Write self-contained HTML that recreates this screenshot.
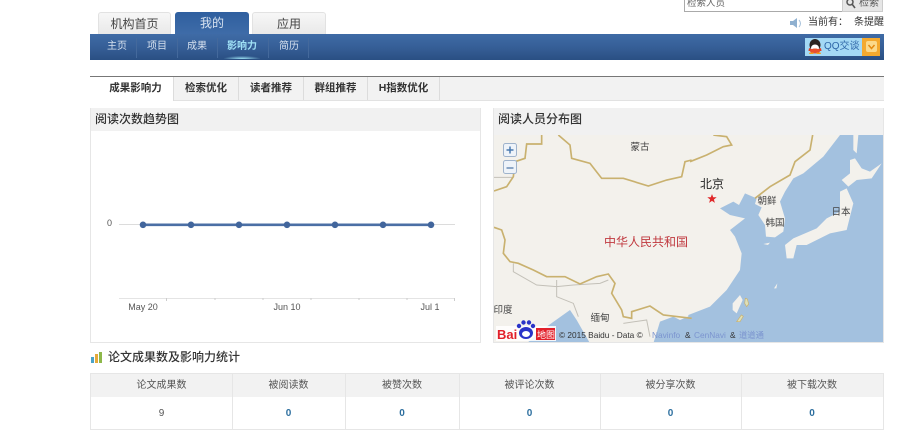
<!DOCTYPE html>
<html><head><meta charset="utf-8">
<style>
html,body{margin:0;padding:0;background:#fff;}
#p{position:relative;width:900px;height:446px;overflow:hidden;background:#fff;font-family:"Liberation Sans","Noto Sans CJK SC",sans-serif;color:#333;filter:blur(.35px);}
#p div{position:absolute;box-sizing:border-box;}
.t{white-space:nowrap;line-height:1;}
.top{top:12px;height:22px;background:linear-gradient(#f7f7f7,#e9e9e9);border:1px solid #e2e2e2;border-bottom:0;border-radius:3px 3px 0 0;font-size:12px;line-height:22px;text-align:center;color:#444;}
.sub{top:41px;font-size:10px;color:#d5e0ee;line-height:12px;}
.sep{top:38px;width:1px;height:20px;background:#44699c;}
.tab{top:77px;height:23px;font-size:10.5px;font-weight:700;line-height:23px;text-align:center;color:#333;border-right:1px solid #dcdcdc;}
.h{font-size:12px;font-weight:500;color:#333;}
.th{top:380px;font-size:10px;color:#555;text-align:center;line-height:12px;}
.td{top:408px;font-size:10px;font-weight:700;color:#2d6f9f;text-align:center;line-height:12px;}
.vl{top:374px;width:1px;height:56px;background:#e6e6e6;}
svg{position:absolute;left:0;top:0;}
svg text{font-family:"Liberation Sans","Noto Sans CJK SC",sans-serif;}
</style></head><body>
<div id="p">
<!-- search -->
<div style="left:684px;top:-6px;width:159px;height:18px;border:1px solid #aaa;background:#fff;"></div>
<div class="t" style="left:687px;top:-1px;font-size:9.5px;color:#666;">检索人员</div>
<div style="left:842px;top:-6px;width:41px;height:18px;border:1px solid #ccc;background:#e6e6e6;"></div>
<div class="t" style="left:859px;top:-1px;font-size:10px;color:#555;">检索</div>
<!-- notice -->
<div class="t" style="left:808px;top:18px;font-size:10px;color:#333;">当前有：</div>
<div class="t" style="left:854px;top:18px;font-size:10px;color:#333;">条提醒</div>
<!-- top tabs -->
<div class="top" style="left:98px;width:73px;">机构首页</div>
<div class="top" style="left:175px;width:74px;height:23px;background:linear-gradient(#2f5f9f,#3f6ca8);border:0;color:#d8e3f0;">我的</div>
<div class="top" style="left:252px;width:74px;">应用</div>
<!-- blue bar -->
<div style="left:90px;top:34px;width:794px;height:26px;background:linear-gradient(#3f6ba6,#365f97 50%,#2a4f83);"></div>
<div class="t sub" style="left:107px;">主页</div>
<div class="sep" style="left:136px;"></div>
<div class="t sub" style="left:147px;">项目</div>
<div class="sep" style="left:177px;"></div>
<div class="t sub" style="left:187px;">成果</div>
<div class="sep" style="left:217px;"></div>
<div class="t sub" style="left:227px;font-weight:700;color:#9fe0f5;">影响力</div>
<div style="left:224px;top:56px;width:36px;height:3px;background:radial-gradient(ellipse at center bottom,#9fe6f7,rgba(159,230,247,0) 75%);"></div>
<div class="sep" style="left:268px;"></div>
<div class="t sub" style="left:279px;">简历</div>
<div class="sep" style="left:308px;"></div>
<!-- QQ -->
<div style="left:805px;top:38px;width:57px;height:18px;background:#a4d9f5;"></div>
<div class="t" style="left:824px;top:42px;font-size:10px;color:#2e66a8;">QQ交谈</div>
<div style="left:862px;top:38px;width:18px;height:18px;background:#f4a92e;"></div>
<!-- second tabs -->
<div style="left:90px;top:76px;width:794px;height:25px;background:#f2f2f2;border-top:1px solid #777;border-bottom:1px solid #e2e2e2;"></div>
<div class="tab" style="left:90px;width:84px;background:#fff;height:24px;padding-left:8px;">成果影响力</div>
<div class="tab" style="left:174px;width:65px;">检索优化</div>
<div class="tab" style="left:239px;width:65px;">读者推荐</div>
<div class="tab" style="left:304px;width:64px;">群组推荐</div>
<div class="tab" style="left:368px;width:72px;">H指数优化</div>
<!-- left panel -->
<div style="left:90px;top:108px;width:391px;height:235px;border:1px solid #e6e6e6;background:#fff;"></div>
<div style="left:91px;top:108px;width:389px;height:23px;background:#f1f1f1;"></div>
<div class="t h" style="left:95px;top:113px;">阅读次数趋势图</div>
<!-- right panel -->
<div style="left:493px;top:108px;width:391px;height:235px;border:1px solid #e6e6e6;background:#fff;"></div>
<div style="left:494px;top:108px;width:389px;height:27px;background:#f1f1f1;"></div>
<div class="t h" style="left:498px;top:113px;">阅读人员分布图</div>

<svg width="900" height="446" viewBox="0 0 900 446">
  <!-- speaker -->
  <path d="M790 21h3l4-3v10l-4-3h-3z" fill="#8fb0d0"/>
  <path d="M799 20q3 3.500 0 7" fill="none" stroke="#a9c3dc" stroke-width="1"/>
  <!-- magnifier -->
  <circle cx="850" cy="2" r="3" fill="none" stroke="#555" stroke-width="1.500"/>
  <path d="M852 4l3 4" stroke="#555" stroke-width="1.600"/>
  <!-- QQ penguin -->
  <ellipse cx="815" cy="45" rx="5.500" ry="6" fill="#2a2320"/>
  <ellipse cx="815" cy="48" rx="4" ry="3.500" fill="#fff"/>
  <path d="M809 48q6 3.500 12 0l.5 3h-13z" fill="#e23b20"/>
  <ellipse cx="815" cy="51" rx="5" ry="2.500" fill="#e8502c"/>
  <path d="M809.500 52.500h4v1.500h-4.500zM816.500 52.500h4l.5 1.500h-4.500z" fill="#f0a020"/>
  <rect x="866" y="41" width="11" height="11" rx="2" fill="#fbd98a"/>
  <path d="M868.500 45l3 3.500 3-3.500" fill="none" stroke="#e58a10" stroke-width="1.500"/>

  <!-- chart -->
  <text x="107" y="226" font-size="9" fill="#555">0</text>
  <path d="M119 224.500H455" stroke="#dcdcdc"/>
  <path d="M119 298.500H455" stroke="#e4e4e4"/>
  <path d="M166.500 298v3M215 298v2M263 298v2M311 298v2M359 298v2M407 298v2M454.500 298v3" stroke="#ccc"/>
  <path d="M143 224.800H431" stroke="#4b6fa5" stroke-width="2.600"/>
  <g fill="#41659c">
    <circle cx="143" cy="224.800" r="3.300"/><circle cx="191" cy="224.800" r="3.300"/><circle cx="239" cy="224.800" r="3.300"/><circle cx="287" cy="224.800" r="3.300"/><circle cx="335" cy="224.800" r="3.300"/><circle cx="383" cy="224.800" r="3.300"/><circle cx="431" cy="224.800" r="3.300"/>
  </g>
  <g font-size="9" fill="#555" text-anchor="middle">
    <text x="143" y="310">May 20</text><text x="287" y="310">Jun 10</text><text x="430" y="310">Jul 1</text>
  </g>

  <!-- map -->
  <svg x="494" y="135" width="389" height="207" viewBox="494 135 389 207">
    <rect x="494" y="135" width="389" height="207" fill="#f3f1ec"/>
    <g transform="translate(690 130) scale(.33333)">
      <path fill="#a3c1df" d="M450 15L580 15V640H-5V555L60 530 110 480 150 420 155 370 135 320 120 300 165 265 120 255 90 235 130 215 147 225 165 190 200 205 195 222 215 232 205 255 225 285 228 320 255 322 280 305 285 265 270 215 285 185 310 145 340 130 400 80z"/>
      <g fill="#f3f1ec">
        <path d="M285 345L310 325 380 295 410 265 450 245 450 185 470 175 490 220 470 300 420 310 350 345 320 345 310 385 290 385z"/>
        <path d="M480 90L495 85 515 115 540 125 575 100 545 145 500 150 475 170 455 150 480 130z"/>
        <path d="M490 15H505L500 70 490 60z"/>
        <path d="M128 520L150 495 158 510 140 550 128 540z"/>
        <path d="M220 342l20-4-6 7zM252 475l10-15-3 15z"/>
      </g>
      <g fill="none" stroke="#c9b16f" stroke-width="5">
        <path d="M0 95L50 75 100 50 125 45 110 20 70 15"/>
        <path d="M195 205L240 170 300 135 315 95 360 60 368 15"/>
      </g>
      <path d="M166 505l6 2 4 15-6 8-6-10zM140 575l14-20 6 4-10 16z" fill="#dfe0b8" stroke="#c9b16f" stroke-width="2"/>
    </g>
    <g transform="translate(490 130) scale(.33333)">
      <path fill="#a3c1df" d="M110 640L170 590 240 540 260 570 300 640zM490 640L510 575 550 560 570 570 605 555V640z"/>
      <g fill="none" stroke="#c3c0b8" stroke-width="3">
        <path d="M70 400L70 425 140 465 200 470 250 465 330 460 355 450"/>
        <path d="M200 450V500L250 520 265 560"/>
        <path d="M12 142H70M400 580L470 570 480 620"/>
      </g>
      <g fill="none" stroke="#c9b16f" stroke-width="5">
        <path d="M205 15L240 45 245 85 300 100 335 145 400 145 475 168 530 150 575 140 585 95 605 90"/>
        <path d="M155 15V42H110L105 85 75 95 70 140 50 170 12 183"/>
        <path d="M12 292L35 300 45 330 40 370 60 395 85 400 130 420 170 440 225 440 270 462 320 440 355 432 375 460 365 490 395 540 400 560 425 565 425 545 480 528 520 555 605 565"/>
      </g>
    </g>
    <g fill="#444" font-size="9.500" text-anchor="middle">
      <text x="640" y="150">蒙古</text>
      <text x="767" y="204">朝鲜</text>
      <text x="775" y="226">韩国</text>
      <text x="841" y="215">日本</text>
      <text x="503" y="313">印度</text>
      <text x="600" y="321">缅甸</text>
    </g>
    <text x="712" y="188" font-size="12" fill="#222" text-anchor="middle">北京</text>
    <path d="M712 194l1.200 3.300h3.500l-2.800 2.200 1 3.400-2.900-2-2.900 2 1-3.400-2.800-2.200h3.500z" fill="#e0282a"/>
    <text x="604" y="246" font-size="12" fill="#c0393f">中华人民共和国</text>
    <!-- zoom controls -->
    <rect x="503.500" y="143.500" width="13" height="13" rx="2" fill="#eef3f9" stroke="#9fb3cc"/>
    <path d="M510 146.500v7M506.500 150h7" stroke="#4a7ab0" stroke-width="1.500"/>
    <rect x="503.500" y="160.500" width="13" height="13" rx="2" fill="#eef3f9" stroke="#9fb3cc"/>
    <path d="M506.500 168h7" stroke="#6a8db5" stroke-width="1.500"/>
    <!-- baidu logo -->
    <rect x="496" y="326" width="60" height="15" fill="#fff" opacity=".85"/>
    <text x="497" y="339" font-size="13" font-weight="700" fill="#e2202a">Bai</text>
    <g fill="#2a34c8">
      <ellipse cx="526" cy="333" rx="7" ry="6"/>
      <circle cx="519" cy="326" r="2.200"/><circle cx="523.500" cy="322.500" r="2.200"/><circle cx="529" cy="322.500" r="2.200"/><circle cx="533" cy="326" r="2.200"/>
    </g>
    <ellipse cx="526" cy="334" rx="4" ry="3" fill="#fff"/>
    <rect x="536" y="328" width="19" height="12" fill="#e2202a"/>
    <text x="537" y="338" font-size="9" fill="#fff">地图</text>
    <text x="559" y="338" font-size="8.300" fill="#333">© 2015 Baidu - Data ©</text>
    <text x="652" y="338" font-size="8.300" fill="#7b94cf">Navinfo</text>
    <text x="685" y="338" font-size="8.300" fill="#333">&amp;</text>
    <text x="694" y="338" font-size="8.300" fill="#7b94cf">CenNavi</text>
    <text x="730" y="338" font-size="8.300" fill="#333">&amp;</text>
    <text x="739" y="338" font-size="8.300" fill="#7b94cf">道道通</text>
  </svg>

  <!-- stats icon -->
  <rect x="91" y="357" width="3" height="6" fill="#4aa3c8"/>
  <rect x="95" y="354" width="3" height="9" fill="#e5a93a"/>
  <rect x="99" y="352" width="3" height="11" fill="#8db84a"/>
</svg>

<!-- stats -->
<div class="t" style="left:108px;top:351px;font-size:12px;font-weight:500;color:#333;">论文成果数及影响力统计</div>
<div style="left:90px;top:373px;width:794px;height:57px;border:1px solid #e6e6e6;background:#fff;"></div>
<div style="left:91px;top:374px;width:792px;height:23px;background:#f2f2f2;"></div>
<div class="vl" style="left:232px;"></div>
<div class="vl" style="left:345px;"></div>
<div class="vl" style="left:459px;"></div>
<div class="vl" style="left:600px;"></div>
<div class="vl" style="left:741px;"></div>
<div class="t th" style="left:91px;width:141px;">论文成果数</div>
<div class="t th" style="left:232px;width:113px;">被阅读数</div>
<div class="t th" style="left:345px;width:114px;">被赞次数</div>
<div class="t th" style="left:459px;width:141px;">被评论次数</div>
<div class="t th" style="left:600px;width:141px;">被分享次数</div>
<div class="t th" style="left:741px;width:142px;">被下载次数</div>
<div class="t td" style="left:91px;width:141px;color:#555;font-weight:400;">9</div>
<div class="t td" style="left:232px;width:113px;">0</div>
<div class="t td" style="left:345px;width:114px;">0</div>
<div class="t td" style="left:459px;width:141px;">0</div>
<div class="t td" style="left:600px;width:141px;">0</div>
<div class="t td" style="left:741px;width:142px;">0</div>
</div>
</body></html>
